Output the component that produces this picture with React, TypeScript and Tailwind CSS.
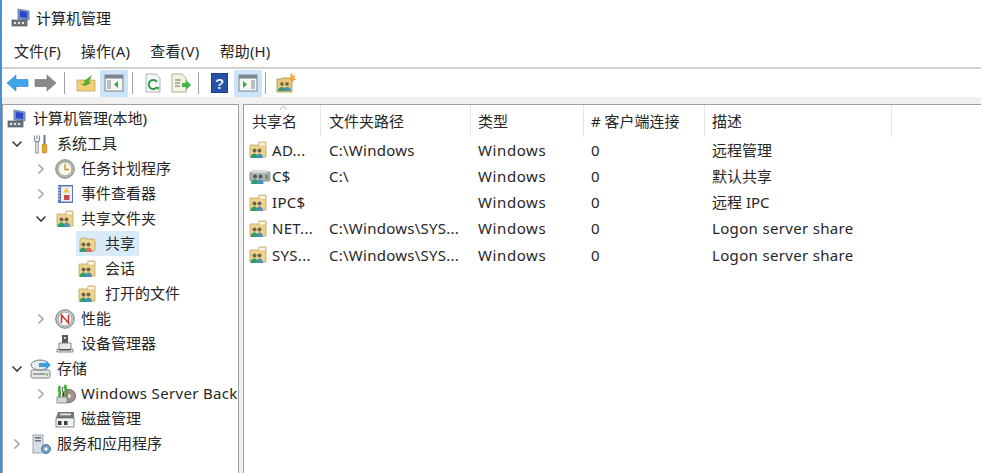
import React from "react";

const FONT = "font-['Noto_Sans','Noto_Sans_CJK_SC',sans-serif]";

function ShareFolder({ open }: { open?: boolean }) {
  return (
    <svg viewBox="0 0 18 18" className="w-[18px] h-[18px]">
      {open ? (
        <path d="M2 5q0-2 2-2h3l1 1h7q2 0 2 2v8q0 2-2 2H2z" fill="#efd58f" stroke="#b89f63" strokeWidth="0.8" />
      ) : (
        <>
          <path d="M1 4h9V1h7v15H1z" fill="#efd38b" stroke="#bca468" strokeWidth="0.8" />
          <rect x="10" y="1.500" width="6.500" height="3.500" fill="#fbf5dc" stroke="#cdb77f" strokeWidth="0.6" />
        </>
      )}
      <circle cx="5.500" cy="9.500" r="2" fill="#6b6650" />
      <circle cx="10.500" cy="9.500" r="2" fill="#6b6650" />
      <path d="M1.500 17c0-3 2-4.500 4-4.500s3 1.500 3 4.500z" fill="#2f9c6e" />
      <path d="M7.500 17c0-3 1-4.500 3-4.500s3.500 1.500 3.500 4.500z" fill={open ? "#d0705a" : "#4b90b8"} />
    </svg>
  );
}

function DriveShare() {
  return (
    <svg viewBox="0 0 22 18" className="w-[22px] h-[18px]">
      <rect x="1" y="5" width="20" height="9" rx="1" fill="#aab2b7" stroke="#7b8187" strokeWidth="0.8" />
      <rect x="3" y="3" width="15" height="3" fill="#d5dadd" />
      <circle cx="6" cy="9.500" r="1.900" fill="#4d5a55" />
      <circle cx="11.500" cy="9.500" r="1.900" fill="#4d5a55" />
      <rect x="16.500" y="8" width="2.500" height="4" fill="#6b8f5a" />
      <path d="M2 17c0-3 2-4.500 4-4.500s3 1.500 3 4.500z" fill="#2f9c6e" />
      <path d="M8 17c0-3 1.500-4.500 3.500-4.500s3 1.500 3 4.500z" fill="#4b90b8" />
    </svg>
  );
}

function Computer() {
  return (
    <svg viewBox="0 0 20 20" className="w-5 h-5">
      <path d="M7 1l11 2v9l-11-1z" fill="#6a8fd0" stroke="#6c7d96" strokeWidth="0.8" />
      <path d="M9 3l7 1v6l-7-1z" fill="#2f46c8" />
      <rect x="11" y="12" width="3" height="2" fill="#8a939b" />
      <rect x="1" y="12" width="15" height="6" fill="#6c757c" stroke="#4b5359" strokeWidth="0.7" />
      <rect x="3" y="14" width="2" height="2" fill="#dfe5ea" />
      <rect x="7" y="14" width="2" height="2" fill="#dfe5ea" />
      <rect x="11" y="14" width="2" height="2" fill="#dfe5ea" />
    </svg>
  );
}

function Tools() {
  return (
    <svg viewBox="0 0 18 20" className="w-[18px] h-5">
      <path d="M2.500 1.500V5c0 2 1.200 3 2.500 3s2.500-1 2.500-3V1.500M5 1.500V5" fill="none" stroke="#87929b" strokeWidth="1.200" />
      <rect x="3.800" y="8" width="2.400" height="11" fill="#f5f7f8" stroke="#6d7780" strokeWidth="0.8" />
      <rect x="11.500" y="1" width="2" height="9" fill="#70797f" />
      <rect x="10.300" y="10" width="4.400" height="9" rx="1.500" fill="#eea51f" stroke="#a76f0d" strokeWidth="0.6" />
    </svg>
  );
}

function Clock() {
  return (
    <svg viewBox="0 0 20 20" className="w-5 h-5">
      <circle cx="10" cy="10" r="9.300" fill="#b3b6b3" stroke="#7f8589" />
      <circle cx="10" cy="10" r="6.800" fill="#fbf7e6" stroke="#8d9090" strokeWidth="0.6" />
      <path d="M10 5v5.500h4" fill="none" stroke="#b98a28" strokeWidth="1.300" />
    </svg>
  );
}

function EventLog() {
  return (
    <svg viewBox="0 0 18 20" className="w-[18px] h-5">
      <rect x="2" y="1" width="15" height="18" fill="#5a76b8" />
      <rect x="5" y="2.500" width="11" height="15" fill="#eef0f4" />
      <path d="M2 3h2M2 6h2M2 9h2M2 12h2M2 15h2" stroke="#e4e7ee" strokeWidth="1" />
      <path d="M10.500 3.500l3 5h-6z" fill="#f0c22e" />
      <rect x="8" y="11" width="5.500" height="5" fill="#c44c4c" />
    </svg>
  );
}

function Perf() {
  return (
    <svg viewBox="0 0 20 20" className="w-5 h-5">
      <circle cx="10" cy="10" r="9.300" fill="#c1c4c2" stroke="#7d8285" />
      <circle cx="10" cy="10" r="6.800" fill="#fdfdfa" stroke="#8a8f91" strokeWidth="0.6" />
      <path d="M6.500 14V6l7 8V6" fill="none" stroke="#cc3328" strokeWidth="1.500" />
    </svg>
  );
}

function Device() {
  return (
    <svg viewBox="0 0 18 20" className="w-[18px] h-5">
      <rect x="6" y="1" width="6" height="9" fill="#555c60" />
      <rect x="8" y="3" width="2" height="2" fill="#cfd4d6" />
      <path d="M6 9H3v6H1v3h16v-3h-2V9h-3z" fill="#e7e9ea" stroke="#6d7478" strokeWidth="0.8" />
      <rect x="3" y="15" width="12" height="1.500" fill="#495055" />
    </svg>
  );
}

function Storage() {
  return (
    <svg viewBox="0 0 22 20" className="w-[22px] h-5">
      <rect x="1" y="11" width="19" height="8" rx="1.500" fill="#e6e9df" stroke="#7a8086" />
      <rect x="3" y="14" width="12" height="2" fill="#9aa2a7" />
      <circle cx="17" cy="15.500" r="1.300" fill="#8db84a" />
      <ellipse cx="10" cy="6" rx="9" ry="5" fill="#e6e9ec" stroke="#7a8086" />
      <path d="M9 4h7V1.500L21 6l-5 4.500V8H9z" fill="#3f9cd8" />
    </svg>
  );
}

function Backup() {
  return (
    <svg viewBox="0 0 22 20" className="w-[22px] h-5">
      <circle cx="15" cy="12" r="6.500" fill="#a78f90" stroke="#75686a" />
      <circle cx="15" cy="12" r="2" fill="#e6dfe0" />
      <rect x="3" y="13" width="10" height="6" fill="#d6d8da" stroke="#73787c" strokeWidth="0.7" />
      <path d="M6 2C3 6 8 8 5 13" fill="none" stroke="#3fab34" strokeWidth="2.600" />
      <path d="M12 1c-3 4 3 6 0 12" fill="none" stroke="#3fab34" strokeWidth="2.600" />
      <path d="M9 3c-2 4 2 6 0 9" fill="none" stroke="#242f28" strokeWidth="1" />
    </svg>
  );
}

function DiskMgmt() {
  return (
    <svg viewBox="0 0 20 18" className="w-5 h-[18px]">
      <path d="M3 2h16v6H1z" fill="#6f777c" />
      <rect x="5" y="3.500" width="11" height="1.800" fill="#e3e6e7" />
      <rect x="1" y="8" width="18" height="9" fill="#f2f3f3" stroke="#6a7075" strokeWidth="0.8" />
      <rect x="3" y="11" width="3.500" height="4" fill="#383e42" />
      <rect x="9" y="11" width="3.500" height="4" fill="#383e42" />
    </svg>
  );
}

function Services() {
  return (
    <svg viewBox="0 0 20 20" className="w-5 h-5">
      <rect x="2" y="1" width="10" height="18" fill="#d8dfe5" stroke="#8b959d" strokeWidth="0.8" />
      <rect x="4" y="3" width="6" height="1.500" fill="#66717b" />
      <rect x="4" y="6" width="6" height="1.500" fill="#66717b" />
      <circle cx="15" cy="15" r="4.500" fill="#6e9fca" stroke="#57748d" />
      <circle cx="15" cy="15" r="1.700" fill="#f4f7f9" />
    </svg>
  );
}

function Chevron({ open }: { open?: boolean }) {
  return (
    <svg viewBox="0 0 12 12" className="w-3 h-3">
      {open ? (
        <path d="M1.500 3.500L6 8l4.500-4.500" fill="none" stroke="#404040" strokeWidth="1.600" />
      ) : (
        <path d="M3.500 1.500L8 6l-4.500 4.500" fill="none" stroke="#a6a6a6" strokeWidth="1.600" />
      )}
    </svg>
  );
}

function ToolBtn({ children, active }: { children: React.ReactNode; active?: boolean }) {
  return (
    <div className={`w-[28px] h-[27px] flex items-center justify-center ${active ? "bg-[#cce4f7]" : ""}`}>
      {children}
    </div>
  );
}

function Sep() {
  return <div className="w-px h-[22px] bg-[#a0a0a0] mx-[3px]" />;
}

function PaneIcon({ side }: { side: "left" | "right" }) {
  return (
    <svg viewBox="0 0 20 18" className="w-5 h-[18px]">
      <rect x="1" y="1" width="18" height="16" fill="#f4f5f5" stroke="#7d868c" />
      <rect x="1" y="1" width="18" height="3.500" fill="#7d868c" />
      {side === "left" ? (
        <>
          <rect x="3" y="6" width="4" height="9" fill="#b7bfc5" />
          <path d="M14 7v7l-4-3.500z" fill="#3fa33f" />
        </>
      ) : (
        <>
          <path d="M5 7v7l4-3.500z" fill="#3fa33f" />
          <rect x="13" y="6" width="4" height="9" fill="#b7bfc5" />
        </>
      )}
    </svg>
  );
}

type Node = {
  label: string;
  indent: string;
  chev?: "open" | "closed";
  icon: React.ReactNode;
  selected?: boolean;
  latin?: boolean;
  leaf?: boolean;
};

const tree: Node[] = [
  { label: "计算机管理(本地)", indent: "pl-[3px]", icon: <Computer /> },
  { label: "系统工具", indent: "pl-[8px]", chev: "open", icon: <Tools /> },
  { label: "任务计划程序", indent: "pl-[32px]", chev: "closed", icon: <Clock /> },
  { label: "事件查看器", indent: "pl-[32px]", chev: "closed", icon: <EventLog /> },
  { label: "共享文件夹", indent: "pl-[32px]", chev: "open", icon: <ShareFolder /> },
  { label: "共享", indent: "pl-[73px]", icon: <ShareFolder open />, selected: true, leaf: true },
  { label: "会话", indent: "pl-[73px]", icon: <ShareFolder />, leaf: true },
  { label: "打开的文件", indent: "pl-[73px]", icon: <ShareFolder />, leaf: true },
  { label: "性能", indent: "pl-[32px]", chev: "closed", icon: <Perf /> },
  { label: "设备管理器", indent: "pl-[51px]", icon: <Device /> },
  { label: "存储", indent: "pl-[8px]", chev: "open", icon: <Storage /> },
  { label: "Windows Server Backup", indent: "pl-[32px]", chev: "closed", icon: <Backup />, latin: true },
  { label: "磁盘管理", indent: "pl-[51px]", icon: <DiskMgmt /> },
  { label: "服务和应用程序", indent: "pl-[8px]", chev: "closed", icon: <Services /> },
];

const rows = [
  { icon: <ShareFolder />, name: "AD...", path: "C:\\Windows", desc: "远程管理", latin: false },
  { icon: <DriveShare />, name: "C$", path: "C:\\", desc: "默认共享", latin: false },
  { icon: <ShareFolder />, name: "IPC$", path: "", desc: "远程 IPC", latin: false },
  { icon: <ShareFolder />, name: "NET...", path: "C:\\Windows\\SYS...", desc: "Logon server share", latin: true },
  { icon: <ShareFolder />, name: "SYS...", path: "C:\\Windows\\SYS...", desc: "Logon server share", latin: true },
];

const cols = "grid grid-cols-[77px_150px_113px_121px_187px]";

export default function App() {
  return (
    <div className={`w-[981px] h-[473px] overflow-hidden bg-white flex flex-col border-l-2 border-[#4a90d0] text-[15px] leading-none text-[#262626] ${FONT}`}>
      <div className="h-[36px] flex items-center pl-[9px] gap-[5px] shrink-0">
        <Computer />
        <span className="text-[#1c1c1c]">计算机管理</span>
      </div>
      <div className="h-[31px] flex items-center pl-[12px] gap-[20px] shrink-0">
        <span>文件(F)</span>
        <span className="tracking-[0.15px]">操作(A)</span>
        <span className="tracking-[0.3px]">查看(V)</span>
        <span className="tracking-[0.15px]">帮助(H)</span>
      </div>
      <div className="h-[30px] shrink-0 border-t-2 border-[#d0d0d0] flex items-center pl-[4px]">
        <svg viewBox="0 0 24 18" className="w-[24px] h-[18px]">
          <path d="M1 9l9-8v4.500h12v7H10V17z" fill="#3ea6ea" stroke="#2a80c4" strokeWidth="0.6" />
        </svg>
        <svg viewBox="0 0 24 18" className="w-[24px] h-[18px] ml-[3px]">
          <path d="M23 9l-9-8v4.500H2v7h12V17z" fill="#8a8a8a" stroke="#6f6f6f" strokeWidth="0.6" />
        </svg>
        <div className="mx-[4px]"><Sep /></div>
        <ToolBtn>
          <svg viewBox="0 0 20 18" className="w-5 h-[18px]">
            <path d="M1 6h18v11H1z" fill="#f1cf78" stroke="#b79a55" strokeWidth="0.7" />
            <path d="M5 10l4-1-1-2 8-6-3 7 2 1-6 3z" fill="#5aaa2e" />
          </svg>
        </ToolBtn>
        <ToolBtn active><PaneIcon side="left" /></ToolBtn>
        <div className="ml-[1px]"><Sep /></div>
        <div className="ml-[3px]">
          <ToolBtn>
            <svg viewBox="0 0 18 20" className="w-[18px] h-5">
              <path d="M2 1h10l4 4v14H2z" fill="#f6f7f6" stroke="#9aa0a3" strokeWidth="0.8" />
              <path d="M13 9a4.500 4.500 0 1 0 0 5" fill="none" stroke="#2e9e4c" strokeWidth="2" />
              <path d="M11 14h4v3z" fill="#2e9e4c" />
            </svg>
          </ToolBtn>
        </div>
        <ToolBtn>
          <svg viewBox="0 0 20 20" className="w-5 h-5">
            <path d="M1 1h10l4 4v14H1z" fill="#f6f3e3" stroke="#9a9a8e" strokeWidth="0.8" />
            <path d="M4 7h6M4 10h5M4 13h5" stroke="#6a6f6a" strokeWidth="1.200" />
            <path d="M11 10h4V7l5 5-5 5v-3h-4z" fill="#45b54a" />
          </svg>
        </ToolBtn>
        <Sep />
        <div className="ml-[5px] w-[24px] flex justify-center">
          <svg viewBox="0 0 17 20" className="w-[17px] h-5">
            <rect x="0.500" y="0.500" width="16" height="19" fill="#2750a8" stroke="#1f3c80" />
            <text x="8.500" y="16" textAnchor="middle" fontSize="15" fontWeight="700" fill="#e8eefc" fontFamily="Liberation Sans">?</text>
          </svg>
        </div>
        <div className="ml-[3px]">
          <ToolBtn active><PaneIcon side="right" /></ToolBtn>
        </div>
        <Sep />
        <div className="ml-[3px]">
          <ToolBtn>
            <svg viewBox="0 0 21 20" className="w-[21px] h-5">
              <path d="M1 6h4l1-1h10v14H1z" fill="#e7c877" stroke="#a98f55" strokeWidth="0.8" />
              <circle cx="6" cy="11" r="1.800" fill="#5f5f4d" />
              <circle cx="11" cy="11" r="1.800" fill="#5f5f4d" />
              <path d="M2 18c0-3 2-4 4-4s3 1 3 4z" fill="#2f9c6e" />
              <path d="M8 18c0-3 1-4 3-4s4 1 4 4z" fill="#4b90b8" />
              <path d="M16 0l1 3 3-1-2 3 3 2-3 0-1 3-1-3-3 0 2-2-1-3z" fill="#f4a93a" />
            </svg>
          </ToolBtn>
        </div>
      </div>
      <div className="h-[7px] shrink-0 bg-[#f0f0f0]" />
      <div className="flex-1 flex min-h-0 bg-[#f0f0f0]">
        <div className="w-[237px] shrink-0 bg-white border-t border-x border-[#a0a0a0] overflow-hidden pt-[1px]">
          {tree.map((n) => (
            <div key={n.label} className={`h-[25px] flex items-center whitespace-nowrap ${n.indent}`}>
              {n.chev && (
                <div className="w-[12px] mr-[7px] flex justify-center shrink-0">
                  <Chevron open={n.chev === "open"} />
                </div>
              )}
              <div className={`flex items-center h-full ${n.leaf ? "gap-[7px]" : "gap-[5px]"} ${n.selected ? "bg-[#d9ebf9] pr-[4px]" : ""}`}>
                <div className="w-[22px] flex justify-center shrink-0">{n.icon}</div>
                <span className={n.latin ? "tracking-[0.33px]" : ""}>{n.label}</span>
              </div>
            </div>
          ))}
        </div>
        <div className="w-[4px] shrink-0" />
        <div className="flex-1 min-w-0 bg-white border-t border-l border-[#a0a0a0] relative">
          <svg viewBox="0 0 10 5" className="absolute left-[35px] top-0 w-[9px] h-[5px]">
            <path d="M1 4.500L5 1l4 3.500" fill="none" stroke="#a8a8a8" />
          </svg>
          <div className={`${cols} h-[32px] items-center`}>
            {["共享名", "文件夹路径", "类型", "# 客户端连接", "描述"].map((h, i) => (
              <div key={h} className={`h-full flex items-center border-r border-[#e5e5e5] whitespace-nowrap ${i < 2 ? "pl-[8px]" : "pl-[7px]"}`}>
                {h}
              </div>
            ))}
          </div>
          {rows.map((r) => (
            <div key={r.name + r.desc} className={`${cols} h-[26.25px] items-center whitespace-nowrap`}>
              <div className="flex items-center pl-[5px]">
                <div className="w-[23px] shrink-0">{r.icon}</div>
                <span className="tracking-[0.3px]">{r.name}</span>
              </div>
              <div className="pl-[8px] tracking-[0.25px]">{r.path}</div>
              <div className="pl-[7px] tracking-[0.6px]">Windows</div>
              <div className="pl-[7px]">0</div>
              <div className={`pl-[7px] ${r.latin ? "tracking-[0.33px]" : ""}`}>{r.desc}</div>
            </div>
          ))}
        </div>
      </div>
    </div>
  );
}
